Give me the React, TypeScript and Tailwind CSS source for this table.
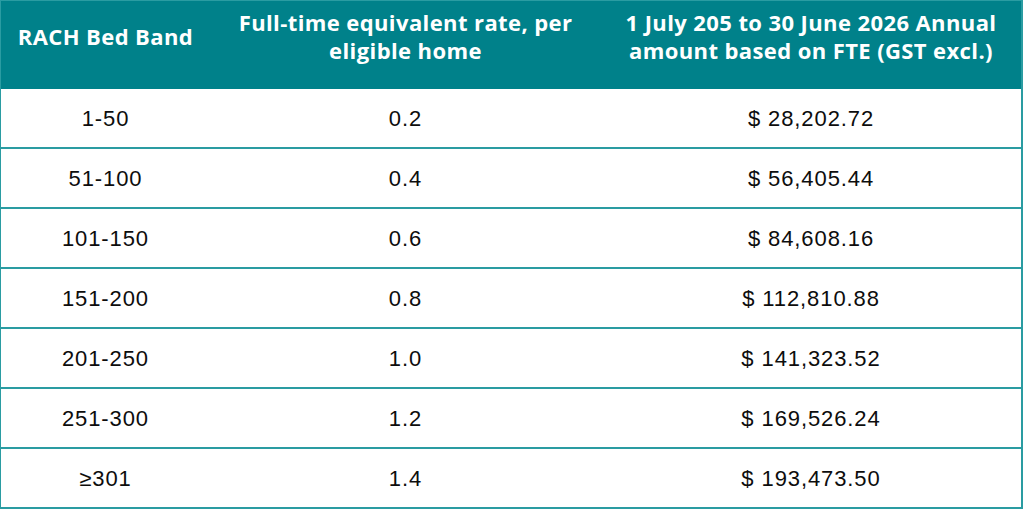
import React from "react";

const rows = [
  ["1-50", "0.2", "$ 28,202.72"],
  ["51-100", "0.4", "$ 56,405.44"],
  ["101-150", "0.6", "$ 84,608.16"],
  ["151-200", "0.8", "$ 112,810.88"],
  ["201-250", "1.0", "$ 141,323.52"],
  ["251-300", "1.2", "$ 169,526.24"],
  ["\u2265301", "1.4", "$ 193,473.50"],
];

export default function App() {
  return (
    <div className="w-[1024px] h-[513px] bg-white">
      <div className="w-[1023px] border-l border-r-2 border-t border-[#2a9ca2]">
        <div
          className="grid grid-cols-[209px_391px_1fr] h-[88px] pb-[18px] bg-[#00818a] text-white font-bold text-[22px] leading-[28px] tracking-[0.4px] text-center"
          style={{ fontFamily: '"Open Sans", "Liberation Sans", sans-serif' }}
        >
          <div className="flex items-center justify-center">RACH Bed Band</div>
          <div className="flex items-center justify-center">
            Full-time equivalent rate, per
            <br />
            eligible home
          </div>
          <div className="flex items-center justify-center">
            1 July 205 to 30 June 2026 Annual
            <br />
            amount based on FTE (GST excl.)
          </div>
        </div>
        {rows.map((r, i) => (
          <div
            key={i}
            className="grid grid-cols-[209px_391px_1fr] h-[60px] border-b-2 border-[#2a9ca2] text-[22px] tracking-[0.9px] text-[#0d0d0d] text-center"
            style={{ fontFamily: '"Liberation Sans", Arial, sans-serif' }}
          >
            <div className="flex items-center justify-center">{r[0]}</div>
            <div className="flex items-center justify-center">{r[1]}</div>
            <div className="flex items-center justify-center">{r[2]}</div>
          </div>
        ))}
      </div>
    </div>
  );
}
